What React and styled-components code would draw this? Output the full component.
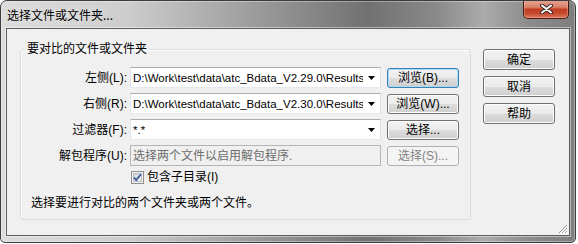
import React from "react";
import styled, { createGlobalStyle } from "styled-components";

const GlobalStyle = createGlobalStyle`
  html, body {
    margin: 0;
    padding: 0;
    background: #ffffff;
  }
  body {
    font-family: "Liberation Sans", "Noto Sans CJK SC", sans-serif;
    font-size: 12px;
    color: #000000;
  }
`;

const Window = styled.div`
  width: 576px;
  height: 243px;
  box-sizing: border-box;
  border: 1px solid #3c3c3c;
  border-radius: 7px 7px 5px 5px;
  background: linear-gradient(
    90deg,
    #dcdcdc 0%,
    #cdcdcd 22%,
    #9a9a9a 45%,
    #717171 64%,
    #8a8a8a 76%,
    #ababab 84%,
    #8c8c8c 92%,
    #7e7e7e 100%
  );
  box-shadow: inset 0 0 0 1px rgba(255, 255, 255, 0.35);
  padding: 0 5px 6px 5px;
  display: flex;
  flex-direction: column;
  overflow: hidden;
`;

const TitleBar = styled.div`
  height: 27px;
  display: flex;
  align-items: center;
  padding-left: 1px;
`;

const Title = styled.div`
  font-family: "Noto Sans CJK SC", sans-serif;
  font-size: 12px;
  line-height: 16px;
  color: #000000;
  text-shadow: 0 0 8px rgba(255, 255, 255, 0.7);
`;

const CloseButton = styled.div`
  align-self: flex-start;
  margin: -1px 1px 0 auto;
  width: 46px;
  height: 19px;
  box-sizing: border-box;
  border: 1px solid #4a1b12;
  border-top: none;
  border-radius: 0 0 5px 5px;
  background: linear-gradient(
    180deg,
    #e6a595 0%,
    #d98068 40%,
    #c23d22 52%,
    #c54a2f 75%,
    #dc7c5f 100%
  );
  box-shadow: inset 0 0 0 1px rgba(255, 210, 190, 0.35);
  display: flex;
  align-items: center;
  justify-content: center;
`;

const Client = styled.div`
  position: relative;
  flex: 1;
  background: #f0f0f0;
  border: 1px solid #5e5e5e;
  box-shadow: 0 0 0 1px rgba(255, 255, 255, 0.45);
  display: flex;
  align-items: flex-start;
  gap: 12px;
  padding: 11px 14px 0 13px;
`;

const Group = styled.fieldset`
  margin: 0;
  width: 451px;
  box-sizing: border-box;
  border: 1px solid #d5dfe5;
  border-radius: 3px;
  padding: 8px 0 9px 0;
  box-shadow: inset 1px 1px 0 #ffffff;
`;

const Legend = styled.legend`
  margin-left: 4px;
  padding: 0 2px 3px 2px;
  font-family: "Noto Sans CJK SC", sans-serif;
  font-size: 12px;
  line-height: 16px;
`;

const Form = styled.div`
  display: flex;
  flex-direction: column;
  gap: 5px;
`;

const Row = styled.div`
  display: flex;
  align-items: center;
  height: 21px;
`;

const Label = styled.label`
  width: 109px;
  box-sizing: border-box;
  padding-right: 3px;
  text-align: right;
  font-size: 12px;
  line-height: 16px;
  white-space: nowrap;
`;

const Field = styled.div`
  width: 251px;
  height: 21px;
  box-sizing: border-box;
  border: 1px solid;
  border-color: ${(p) =>
    p.disabled ? "#b5b5b5" : "#abadb3 #dbdfe6 #e3e9ef #e2e3ea"};
  background: ${(p) => (p.disabled ? "#f0f0f0" : "#ffffff")};
  color: ${(p) => (p.disabled ? "#6d6d6d" : "#000000")};
  display: flex;
  align-items: center;
`;

const FieldText = styled.div`
  flex: 1;
  overflow: hidden;
  white-space: nowrap;
  padding-left: 2px;
  font-size: ${(p) => (p.cjk ? "12px" : "11.5px")};
  line-height: 16px;
`;

const Arrow = styled.div`
  width: 16px;
  display: flex;
  align-items: center;
  justify-content: center;
  padding-right: 1px;
`;

const Button = styled.div`
  width: 72px;
  height: ${(p) => (p.side ? "21px" : "20px")};
  margin-left: ${(p) => (p.side ? "0" : "6px")};
  box-sizing: border-box;
  border: 1px solid
    ${(p) => (p.disabled ? "#adb2b5" : p.focused ? "#3c7fb1" : "#707070")};
  border-radius: 3px;
  background: ${(p) =>
    p.disabled
      ? "#f4f4f4"
      : "linear-gradient(180deg, #f2f2f2 0%, #ebebeb 50%, #dddddd 51%, #cfcfcf 100%)"};
  box-shadow: inset 0 0 0 1px
    ${(p) => (p.disabled ? "#f4f4f4" : p.focused ? "#a6dcf7" : "#fcfcfc")};
  color: ${(p) => (p.disabled ? "#838383" : "#000000")};
  font-size: 12px;
  line-height: 16px;
  display: flex;
  align-items: center;
  justify-content: center;
  white-space: nowrap;
`;

const CheckRow = styled.div`
  display: flex;
  align-items: center;
  gap: 3px;
  height: 16px;
  margin-top: -2px;
  padding-left: 110px;
  font-size: 12px;
  line-height: 16px;
`;

const Hint = styled.div`
  margin-top: 4px;
  padding-left: 10px;
  font-size: 12px;
  line-height: 16px;
  font-family: "Noto Sans CJK SC", sans-serif;
  white-space: nowrap;
`;

const SideButtons = styled.div`
  margin-top: 9px;
  display: flex;
  flex-direction: column;
  gap: 6px;
`;

const Grip = styled.svg`
  position: absolute;
  right: 1px;
  bottom: 1px;
`;

const DropArrow = () => (
  <svg width="7" height="4" viewBox="0 0 7 4">
    <path d="M0 0 H7 L3.5 4 Z" fill="#000000" />
  </svg>
);

const Check = () => (
  <svg width="13" height="13" viewBox="0 0 13 13">
    <defs>
      <linearGradient id="cbg" x1="0" y1="0" x2="1" y2="1">
        <stop offset="0" stopColor="#cbcfd5" />
        <stop offset="1" stopColor="#f6f6f6" />
      </linearGradient>
    </defs>
    <rect x="0.5" y="0.5" width="12" height="12" fill="#f4f4f4" stroke="#8f8f8f" />
    <rect x="2.5" y="2.5" width="8" height="8" fill="url(#cbg)" stroke="#b9bcc2" />
    <path
      d="M3 6.5 L5.2 9 L10 3.2"
      fill="none"
      stroke="#3a5a9c"
      strokeWidth="1.8"
    />
  </svg>
);

const CloseX = () => (
  <svg width="13" height="10" viewBox="0 0 13 10">
    <path
      d="M2 1.5 L11 8.5 M11 1.5 L2 8.5"
      stroke="#3a2a26"
      strokeWidth="4"
      strokeLinecap="round"
    />
    <path
      d="M2 1.5 L11 8.5 M11 1.5 L2 8.5"
      stroke="#ffffff"
      strokeWidth="2"
      strokeLinecap="round"
    />
  </svg>
);

const rows = [
  {
    label: "左侧(L):",
    value: "D:\\Work\\test\\data\\atc_Bdata_V2.29.0\\Results\\",
    button: "浏览(B)...",
    focused: true,
  },
  {
    label: "右侧(R):",
    value: "D:\\Work\\test\\data\\atc_Bdata_V2.30.0\\Results\\",
    button: "浏览(W)...",
  },
  { label: "过滤器(F):", value: "*.*", button: "选择..." },
];

export default function App() {
  return (
    <>
      <GlobalStyle />
      <Window>
        <TitleBar>
          <Title>选择文件或文件夹...</Title>
          <CloseButton>
            <CloseX />
          </CloseButton>
        </TitleBar>
        <Client>
          <Group>
            <Legend>要对比的文件或文件夹</Legend>
            <Form>
              {rows.map((r) => (
                <Row key={r.label}>
                  <Label>{r.label}</Label>
                  <Field>
                    <FieldText>{r.value}</FieldText>
                    <Arrow>
                      <DropArrow />
                    </Arrow>
                  </Field>
                  <Button focused={r.focused}>{r.button}</Button>
                </Row>
              ))}
              <Row>
                <Label>解包程序(U):</Label>
                <Field disabled>
                  <FieldText cjk>选择两个文件以启用解包程序.</FieldText>
                </Field>
                <Button disabled>选择(S)...</Button>
              </Row>
              <CheckRow>
                <Check />
                <span>包含子目录(I)</span>
              </CheckRow>
              <Hint>选择要进行对比的两个文件夹或两个文件。</Hint>
            </Form>
          </Group>
          <SideButtons>
            <Button side>确定</Button>
            <Button side>取消</Button>
            <Button side>帮助</Button>
          </SideButtons>
          <Grip width="11" height="11" viewBox="0 0 11 11">
            <path
              d="M10 2 L2 10 M10 5 L5 10 M10 8 L8 10"
              stroke="#9a9a9a"
              strokeWidth="1"
            />
            <path
              d="M11 3 L3 11 M11 6 L6 11 M11 9 L9 11"
              stroke="#ffffff"
              strokeWidth="1"
            />
          </Grip>
        </Client>
      </Window>
    </>
  );
}
